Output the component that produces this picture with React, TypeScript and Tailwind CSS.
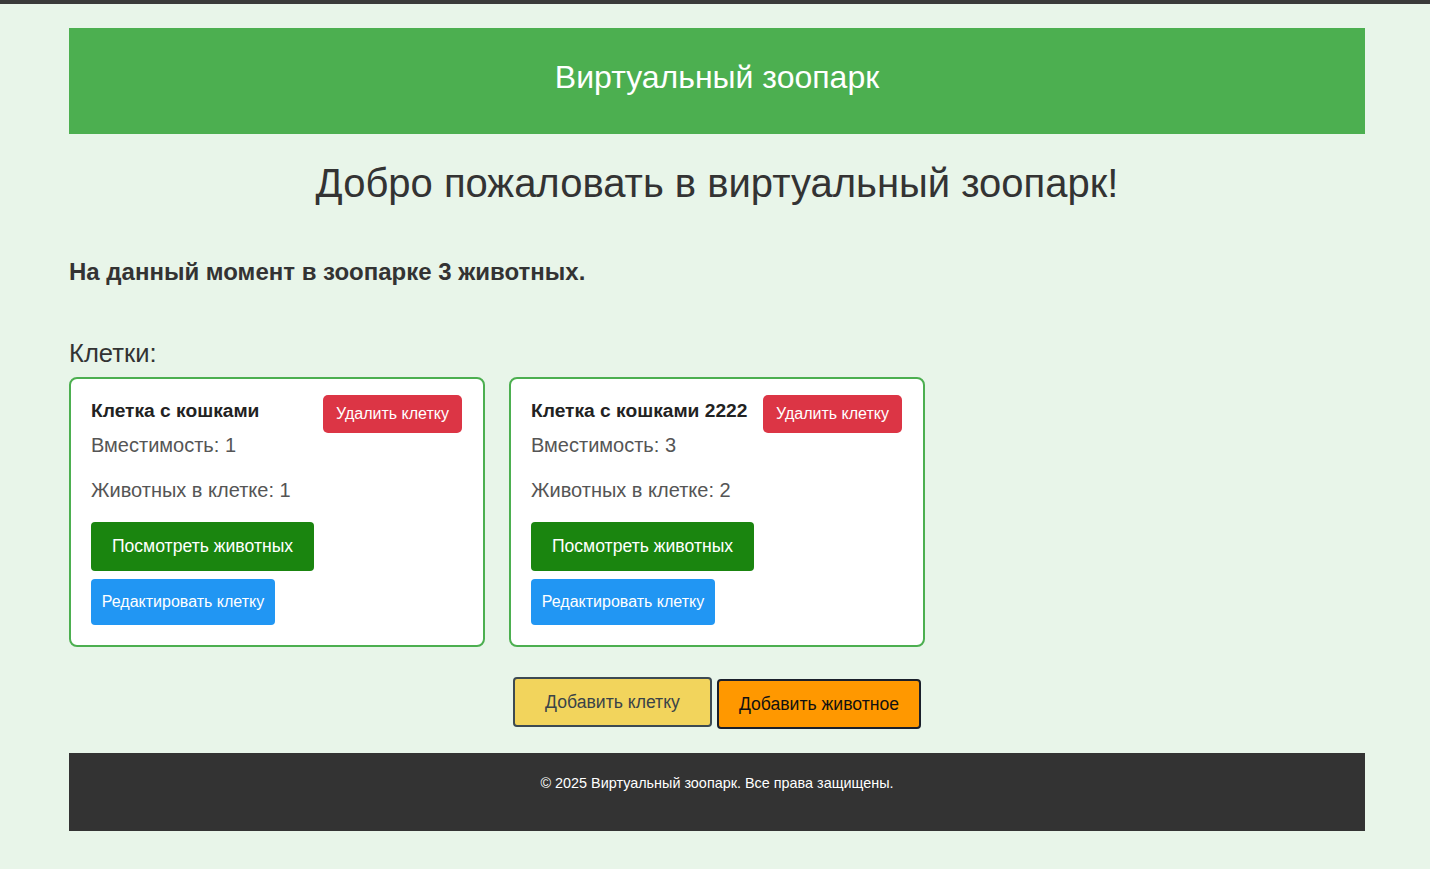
import React from "react";

const cages = [
  { name: "Клетка с кошками", capacity: 1, count: 1 },
  { name: "Клетка с кошками 2222", capacity: 3, count: 2 },
];

function CageCard({ name, capacity, count }: { name: string; capacity: number; count: number }) {
  return (
    <div className="w-[416px] rounded-lg border-2 border-[#4caf50] bg-white pl-5 pr-[21px] pt-4 pb-5">
      <div className="flex items-start justify-between">
        <h3 className="mt-[5px] text-[19.2px] leading-[22px] font-bold text-[#222]">{name}</h3>
        <button className="h-[38px] w-[139px] rounded-[5px] bg-[#dc3545] text-[16px] text-white">
          Удалить клетку
        </button>
      </div>
      <p className="text-[20px] leading-[24px] text-[#555]">Вместимость: {capacity}</p>
      <p className="mt-[21px] text-[20px] leading-[24px] text-[#555]">Животных в клетке: {count}</p>
      <div className="mt-5 flex flex-col items-start gap-2">
        <button className="h-[49px] w-[223px] rounded-[4px] bg-[#1a850f] text-[17.6px] text-white">
          Посмотреть животных
        </button>
        <button className="h-[46px] w-[184px] rounded-[4px] bg-[#2196f3] text-[16px] text-white">
          Редактировать клетку
        </button>
      </div>
    </div>
  );
}

export default function App() {
  return (
    <div
      className="min-h-[869px] border-t-4 border-[#3a3a3a] bg-[#e8f5e9] pt-6 pl-1"
      style={{ fontFamily: '"Liberation Sans", Arial, sans-serif' }}
    >
      <div className="mx-auto w-[1296px]">
        {/* Header */}
        <header className="h-[106px] bg-[#4caf50] pt-[31px] text-center">
          <h1 className="text-[32px] leading-[36px] text-white">Виртуальный зоопарк</h1>
        </header>

        <h2 className="mt-[26px] text-center text-[40px] leading-[46px] text-[#333]">
          Добро пожаловать в виртуальный зоопарк!
        </h2>

        <p className="mt-[52px] text-[24px] leading-[28px] font-bold text-[#333]">
          На данный момент в зоопарке 3 животных.
        </p>

        <h3 className="mt-[52px] text-[25.6px] leading-[30px] text-[#333]">Клетки:</h3>

        <div className="mt-[9px] flex gap-6">
          {cages.map((c) => (
            <CageCard key={c.name} {...c} />
          ))}
        </div>

        <div className="mt-[30px] flex items-start justify-center gap-[5px]">
          <button className="h-[50px] w-[199px] rounded-[4px] border-2 border-[#3d4a52] bg-[#f2d45c] text-[17.6px] text-[#3a4348]">
            Добавить клетку
          </button>
          <button className="mt-[2px] h-[50px] w-[204px] rounded-[4px] border-2 border-[#1a1f2b] bg-[#ff9800] text-[17.6px] text-[#111]">
            Добавить животное
          </button>
        </div>

        {/* Footer */}
        <footer className="mt-6 h-[78px] bg-[#333] pt-5 text-center">
          <p className="text-[14.4px] leading-5 text-white">© 2025 Виртуальный зоопарк. Все права защищены.</p>
        </footer>
      </div>
    </div>
  );
}
